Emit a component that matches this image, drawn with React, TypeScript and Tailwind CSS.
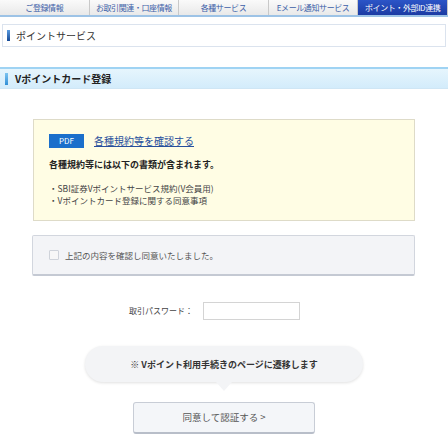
const tabs = [
  { label: "ご登録情報", active: false },
  { label: "お取引関連・口座情報", active: false },
  { label: "各種サービス", active: false },
  { label: "Eメール通知サービス", active: false },
  { label: "ポイント・外部ID連携", active: true },
];

const font = { fontFamily: '"Noto Sans CJK JP", "Liberation Sans", sans-serif' };

export default function App() {
  return (
    <div className="w-[448px] h-[436px] bg-white overflow-hidden text-[#333]" style={font}>
      {/* tabs */}
      <div className="flex h-[17px] border-b-2 border-[#9dc3e6]">
        {tabs.map((t) => (
          <div
            key={t.label}
            className={`flex-1 flex items-center justify-center whitespace-nowrap text-[8px] tracking-[-0.4px] leading-none border-r border-[#c9c9c9] ${
              t.active
                ? "bg-gradient-to-b from-[#2c55c8] to-[#1c3ba3] text-white"
                : "bg-gradient-to-b from-[#fafafa] to-[#e9e9e9] text-[#3d5fa8]"
            }`}
          >
            {t.label}
          </div>
        ))}
      </div>

      {/* ポイントサービス */}
      <div className="mx-[2px] mt-[7px] h-[23px] border border-[#dbe3ee] bg-white flex items-center pl-[4px]">
        <span className="w-[3px] h-[11px] bg-gradient-to-b from-[#5a9be0] to-[#174a96] mr-[6px]" />
        <span className="text-[10px] leading-none">ポイントサービス</span>
      </div>

      {/* Vポイントカード登録 */}
      <div className="mt-[20px] h-[22px] border-t-2 border-b border-t-[#9fd3f3] border-b-[#cfe6f5] bg-gradient-to-b from-[#e6f5fd] to-[#d3ecfb] flex items-center pl-[5px]">
        <span className="w-[3px] h-[12px] bg-gradient-to-b from-[#7cc4f0] to-[#2f8fd6] mr-[7px]" />
        <span className="text-[10px] font-bold leading-none text-[#222]">Vポイントカード登録</span>
      </div>

      {/* terms box */}
      <div className="ml-[33px] mr-[33px] mt-[30px] h-[102px] bg-[#fffde4] border border-[#dedbc8] pl-[15px] pt-[14px]">
        <div className="flex items-center gap-[10px]">
          <span className="w-[35px] h-[14px] bg-[#1b6fcb] text-white text-[8px] flex items-center justify-center leading-none">
            PDF
          </span>
          <a className="text-[10px] text-[#274f9c] underline leading-none">各種規約等を確認する</a>
        </div>
        <p className="mt-[12px] text-[9px] font-bold leading-none text-[#222]">各種規約等には以下の書類が含まれます。</p>
        <ul className="mt-[13px] text-[8.5px] leading-[12px] text-[#444]">
          <li>・SBI証券Vポイントサービス規約(V会員用)</li>
          <li>・Vポイントカード登録に関する同意事項</li>
        </ul>
      </div>

      {/* checkbox */}
      <div className="ml-[32px] mr-[33px] mt-[14px] h-[41px] bg-[#f3f4f7] border border-[#d2d6de] border-b-2 border-b-[#c4c9d3] rounded-[2px] flex items-center pl-[16px]">
        <span className="w-[10px] h-[10px] border border-[#cfd3da] bg-[#f7f7f7] rounded-[1px] mr-[6px]" />
        <span className="text-[8.5px] text-[#555] leading-none">上記の内容を確認し同意いたしました。</span>
      </div>

      {/* password */}
      <div className="mt-[26px] flex items-center pl-[129px] gap-[10px]">
        <span className="text-[8px] text-[#444] leading-none">取引パスワード：</span>
        <span className="w-[97px] h-[18px] border border-[#d4d4d4] bg-white" />
      </div>

      {/* bubble */}
      <div className="mt-[26px] flex justify-center">
        <div className="relative w-[278px] h-[36px] rounded-full bg-[#f3f4f6] shadow-[0_1px_3px_rgba(0,0,0,0.12)] flex items-center justify-center">
          <span className="text-[9px] font-bold text-[#333] leading-none">※ Vポイント利用手続きのページに遷移します</span>
          <span className="absolute left-1/2 -translate-x-1/2 top-full w-0 h-0 border-l-[8px] border-r-[8px] border-t-[9px] border-l-transparent border-r-transparent border-t-[#f3f4f6]" />
        </div>
      </div>

      {/* button */}
      <div className="mt-[20px] flex justify-center">
        <button className="w-[182px] h-[32px] bg-[#f4f6f9] border border-[#c8cdd6] border-b-2 border-b-[#b8bec9] rounded-[3px] text-[9.5px] text-[#555] flex items-center justify-center">
          同意して認証する &gt;
        </button>
      </div>
    </div>
  );
}
